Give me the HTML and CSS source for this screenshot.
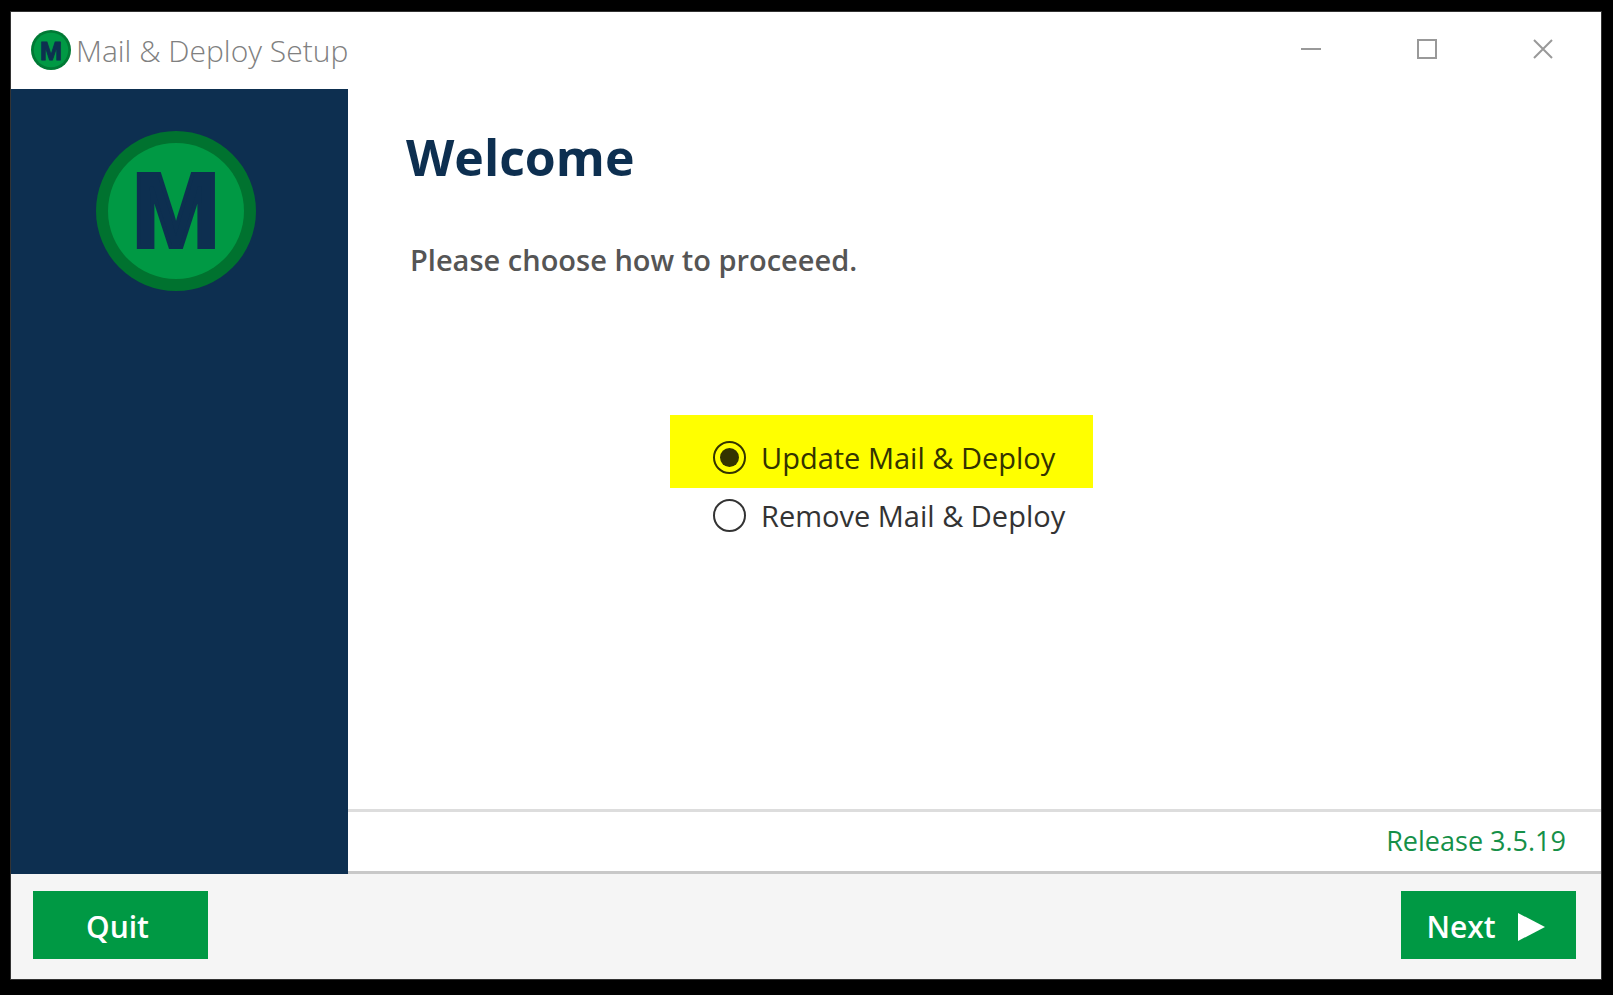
FILE: index.html
```
<!DOCTYPE html>
<html lang="en">
<head>
    <meta charset="UTF-8">
    <meta name="viewport" content="width=device-width, initial-scale=1.0">
    <title>Mail &amp; Deploy Setup</title>
    <link rel="stylesheet" href="styles.css">
</head>
<body>

<div class="window">
    <header class="title-bar">
        <svg class="title-icon" viewBox="0 0 160 160" aria-hidden="true">
            <circle cx="80" cy="80" r="80" fill="#007a35"/>
            <circle cx="80" cy="80" r="69" fill="#009944"/>
            <text class="logo-letter" x="80" y="118">M</text>
        </svg>
        <span class="title-text">Mail &amp; Deploy Setup</span>
        <div class="window-buttons">
            <button type="button" class="window-button" aria-label="Minimize">
                <svg width="20" height="20" viewBox="0 0 20 20"><path d="M0 10H20" stroke="#999" stroke-width="2"/></svg>
            </button>
            <button type="button" class="window-button" aria-label="Maximize">
                <svg width="20" height="20" viewBox="0 0 20 20"><rect x="1" y="1" width="18" height="18" fill="none" stroke="#999" stroke-width="2"/></svg>
            </button>
            <button type="button" class="window-button" aria-label="Close">
                <svg width="20" height="20" viewBox="0 0 20 20"><path d="M1 1L19 19M19 1L1 19" stroke="#999" stroke-width="2"/></svg>
            </button>
        </div>
    </header>

    <div class="content">
        <aside class="sidebar">
            <svg class="logo" viewBox="0 0 160 160" role="img" aria-label="Mail &amp; Deploy">
                <circle cx="80" cy="80" r="80" fill="#00722f"/>
                <circle cx="80" cy="80" r="68" fill="#009944"/>
                <text class="logo-letter" x="80" y="116">M</text>
            </svg>
        </aside>

        <main class="page">
            <div class="page-body">
                <h1>Welcome</h1>
                <p class="lead">Please choose how to proceeed.</p>

                <div class="options" role="radiogroup" aria-label="Setup action">
                    <label class="option highlighted" for="update">
                        <input type="radio" id="update" name="action" value="update" checked>
                        Update Mail &amp; Deploy
                    </label>
                    <label class="option" for="remove">
                        <input type="radio" id="remove" name="action" value="remove">
                        Remove Mail &amp; Deploy
                    </label>
                </div>
            </div>
            <div class="release">Release 3.5.19</div>
        </main>
    </div>

    <footer class="footer">
        <button type="button" class="btn">Quit</button>
        <button type="button" class="btn">
            Next
            <svg width="27" height="28" viewBox="0 0 27 28" aria-hidden="true"><path d="M0 0L27 14L0 28Z" fill="#fff"/></svg>
        </button>
    </footer>
</div>

</body>
</html>
```
FILE: styles.css
```
* {
    box-sizing: border-box;
}
body {
    margin: 0;
    min-height: 100vh;
    display: flex;
    padding: 11px 11px 15px 10px;
    background-color: #000;
    font-family: "Open Sans", "Noto Sans", sans-serif;
    font-size: 29px;
    line-height: 40px;
}
.window {
    flex: 1;
    display: flex;
    flex-direction: column;
    border: 1px solid #333;
    background-color: #fff;
}

/* Title bar */
.title-bar {
    display: flex;
    align-items: flex-start;
    height: 77px;
    padding-left: 20px;
    color: #808080;
}
.title-icon {
    width: 40px;
    height: 40px;
    margin-top: 18px;
}
.title-text {
    margin-top: 19px;
    margin-left: 5px;
    font-size: 30px;
    font-weight: 300;
}
.window-buttons {
    display: flex;
    margin-left: auto;
}
.window-button {
    display: flex;
    align-items: center;
    justify-content: center;
    width: 116px;
    height: 74px;
    padding: 0;
    border: none;
    background: none;
}
.window-button:hover {
    background-color: #e5e5e5;
}

/* Sidebar and page */
.content {
    flex: 1;
    display: flex;
}
.sidebar {
    width: 337px;
    padding: 42px 0 0 85px;
    background-color: #0d2f50;
}
.logo {
    display: block;
    width: 160px;
    height: 160px;
}
.logo-letter {
    font-family: "Liberation Sans", Arial, sans-serif;
    font-size: 106px;
    font-weight: bold;
    text-anchor: middle;
    fill: #0d2f50;
    stroke: #0d2f50;
    stroke-width: 4px;
}
.page {
    flex: 1;
    display: flex;
    flex-direction: column;
}
.page-body {
    flex: 1;
    padding: 35px 58px 0;
}
h1 {
    margin: 0;
    color: #0d2f50;
    font-size: 50px;
    line-height: 66px;
}
.lead {
    margin: 50px 0 0 4px;
    color: #555;
    font-weight: 600;
}
.options {
    width: 423px;
    margin: 135px 0 0 264px;
    color: #333;
}
.option {
    display: flex;
    align-items: center;
    gap: 15px;
    height: 55px;
    padding-left: 43px;
}
.option.highlighted {
    height: 73px;
    padding-top: 12px;
    background-color: #ff0;
    color: #330;
}
.option input {
    appearance: none;
    width: 33px;
    height: 33px;
    margin: 0;
    padding: 5px;
    border: 2px solid currentColor;
    border-radius: 50%;
    background-clip: content-box;
    color: inherit;
}
.option input:checked {
    background-color: currentColor;
}
.release {
    padding: 9px 35px 10px;
    border-top: 3px solid #ddd;
    border-bottom: 3px solid #c8c8c8;
    color: #159048;
    font-size: 27px;
    text-align: right;
}

/* Footer */
.footer {
    display: flex;
    justify-content: space-between;
    align-items: flex-start;
    height: 105px;
    padding: 17px 25px 0 22px;
    background-color: #f5f5f5;
}
.btn {
    display: flex;
    align-items: center;
    justify-content: center;
    gap: 22px;
    width: 175px;
    height: 68px;
    padding: 4px 6px 0 0;
    border: none;
    background-color: #009944;
    color: #fff;
    font: inherit;
    font-size: 30px;
    font-weight: 600;
    cursor: pointer;
}
.btn:hover {
    background-color: #00722f;
}
```
